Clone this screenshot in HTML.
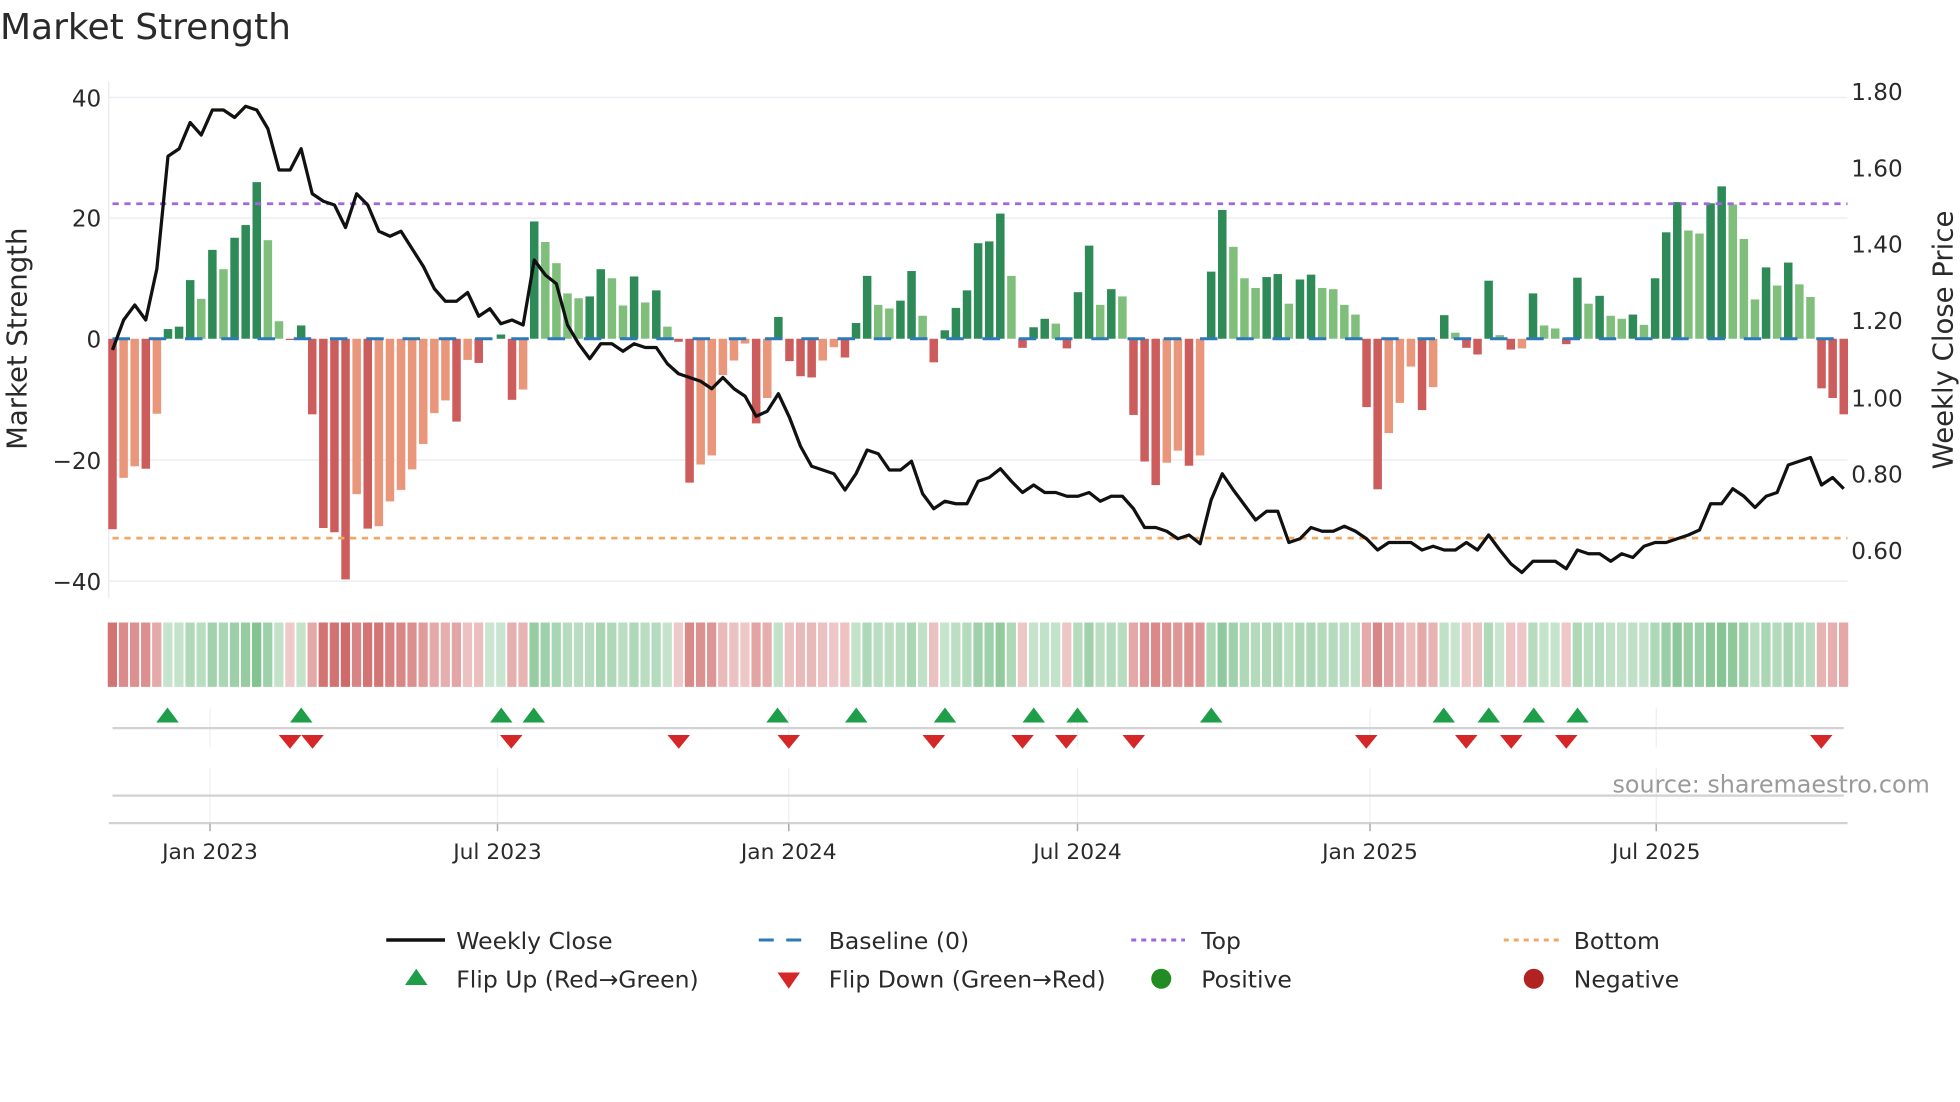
<!DOCTYPE html>
<html><head><meta charset="utf-8"><style>
html,body{margin:0;padding:0;background:#fff;}
svg{display:block;}
text{font-family:"DejaVu Sans","Liberation Sans",sans-serif;fill:#2a2a2a;}
</style></head><body>
<svg id="s" width="1960" height="1102" viewBox="0 0 1568 881.6" xmlns="http://www.w3.org/2000/svg">
<rect width="1568" height="881.6" fill="#fff"/>
<text x="0" y="31" font-size="28.8">Market Strength</text>
<g stroke="#eceef3" stroke-width="1.2">
<line x1="87" x2="1478" y1="78" y2="78"/><line x1="87" x2="1478" y1="174.5" y2="174.5"/>
<line x1="87" x2="1478" y1="368" y2="368"/><line x1="87" x2="1478" y1="465" y2="465"/>
<line x1="87" x2="87" y1="65" y2="478"/>
</g>
<g font-size="18.5" text-anchor="end">
<text x="81" y="85">40</text><text x="81" y="181">20</text><text x="81" y="278">0</text>
<text x="81" y="375">−20</text><text x="81" y="472">−40</text>
</g>
<g font-size="18.5">
<text x="1481" y="80">1.80</text><text x="1481" y="141">1.60</text><text x="1481" y="202">1.40</text>
<text x="1481" y="263">1.20</text><text x="1481" y="325">1.00</text><text x="1481" y="386">0.80</text>
<text x="1481" y="447">0.60</text>
</g>
<text transform="translate(21,271) rotate(-90)" font-size="22" text-anchor="middle">Market Strength</text>
<text transform="translate(1562,272) rotate(-90)" font-size="22" text-anchor="middle">Weekly Close Price</text>
<g id="bars"></g>
<line x1="90" x2="1478" y1="271" y2="271" stroke="#2e7ab8" stroke-width="2.4" stroke-dasharray="14 15"/>
<line x1="90" x2="1478" y1="163" y2="163" stroke="#a066e0" stroke-width="2.2" stroke-dasharray="5 4.5"/>
<line x1="90" x2="1478" y1="430.5" y2="430.5" stroke="#f0a868" stroke-width="2.2" stroke-dasharray="5 4.5"/>
<polyline id="pl" fill="none" stroke="#111" stroke-width="2.6" stroke-linejoin="round"/>
<g id="heat"></g>
<g stroke="#edeff3" stroke-width="1">
<line x1="168" x2="168" y1="566" y2="598"/><line x1="398" x2="398" y1="566" y2="598"/><line x1="631" x2="631" y1="566" y2="598"/><line x1="862" x2="862" y1="566" y2="598"/><line x1="1096" x2="1096" y1="566" y2="598"/><line x1="1325" x2="1325" y1="566" y2="598"/>
<line x1="168" x2="168" y1="614" y2="658"/><line x1="398" x2="398" y1="614" y2="658"/><line x1="631" x2="631" y1="614" y2="658"/><line x1="862" x2="862" y1="614" y2="658"/><line x1="1096" x2="1096" y1="614" y2="658"/><line x1="1325" x2="1325" y1="614" y2="658"/>
</g>
<line x1="90" x2="1475" y1="582.5" y2="582.5" stroke="#d2d2d2" stroke-width="1.8"/>
<line x1="90" x2="1475" y1="636.5" y2="636.5" stroke="#d2d2d2" stroke-width="1.8"/>
<line x1="87" x2="1478" y1="658.5" y2="658.5" stroke="#d2d2d2" stroke-width="1.8"/>
<g stroke="#aaa" stroke-width="1.2">
<line x1="168" x2="168" y1="659" y2="665"/><line x1="398" x2="398" y1="659" y2="665"/><line x1="631" x2="631" y1="659" y2="665"/><line x1="862" x2="862" y1="659" y2="665"/><line x1="1096" x2="1096" y1="659" y2="665"/><line x1="1325" x2="1325" y1="659" y2="665"/>
</g>
<g id="mk"></g>
<text x="1290" y="634" font-size="19.1" style="fill:#9a9a9a">source: sharemaestro.com</text>
<g font-size="17.4" text-anchor="middle">
<text x="168" y="687">Jan 2023</text><text x="398" y="687">Jul 2023</text><text x="631" y="687">Jan 2024</text>
<text x="862" y="687">Jul 2024</text><text x="1096" y="687">Jan 2025</text><text x="1325" y="687">Jul 2025</text>
</g>
<line x1="309" x2="356" y1="752" y2="752" stroke="#111" stroke-width="2.8"/>
<text x="365" y="759" font-size="18.8">Weekly Close</text>
<line x1="607" x2="650" y1="752" y2="752" stroke="#2e7ab8" stroke-width="2.4" stroke-dasharray="12 10"/>
<text x="663" y="759" font-size="18.8">Baseline (0)</text>
<line x1="905" x2="948" y1="752" y2="752" stroke="#a066e0" stroke-width="2.4" stroke-dasharray="4 4"/>
<text x="961" y="759" font-size="18.8">Top</text>
<line x1="1203" x2="1247" y1="752" y2="752" stroke="#f0a868" stroke-width="2.4" stroke-dasharray="4 4"/>
<text x="1259" y="759" font-size="18.8">Bottom</text>
<polygon points="333,775 342,788 324,788" fill="#1f9e4a"/>
<text x="365" y="790" font-size="18.8">Flip Up (Red→Green)</text>
<polygon points="622,778 640,778 631,791" fill="#d62728"/>
<text x="663" y="790" font-size="18.8">Flip Down (Green→Red)</text>
<circle cx="929" cy="783" r="8" fill="#228b22"/>
<text x="961" y="790" font-size="18.8">Positive</text>
<circle cx="1227" cy="783" r="8" fill="#b22222"/>
<text x="1259" y="790" font-size="18.8">Negative</text>
</svg>
<script>
(function(){
var V=[-31.5,-23,-21.1,-21.5,-12.4,1.6,2,9.7,6.6,14.7,11.5,16.7,18.8,25.9,16.3,2.9,-0.2,2.2,-12.5,-31.3,-32,-39.8,-25.7,-31.4,-31,-26.9,-25,-21.6,-17.4,-12.3,-10.2,-13.7,-3.5,-4,0,0.7,-10.1,-8.4,19.4,16,12.5,7.5,6.7,7,11.5,10,5.5,10.3,6,8,2,-0.5,-23.8,-20.8,-19.3,-6,-3.6,-0.8,-14,-9.8,3.6,-3.7,-6.2,-6.4,-3.6,-1.4,-3.1,2.6,10.4,5.6,5,6.3,11.2,3.8,-3.9,1.4,5.1,8,15.8,16.1,20.7,10.4,-1.5,1.9,3.3,2.5,-1.6,7.7,15.4,5.6,8.2,7,-12.6,-20.3,-24.2,-20.5,-18.5,-21,-19.3,11.1,21.3,15.2,10,8.4,10.2,10.7,5.8,9.8,10.6,8.4,8.2,5.6,4,-11.3,-24.9,-15.6,-10.6,-4.6,-11.8,-8,3.9,1,-1.5,-2.6,9.6,0.6,-1.8,-1.6,7.5,2.2,1.7,-0.9,10.1,5.8,7.1,3.8,3.3,4,2.3,10,17.6,22.6,17.9,17.4,22.4,25.2,22.2,16.5,6.5,11.8,8.8,12.6,9,6.9,-8.2,-9.8,-12.5];
var D="DLLDLDDDLD"+"LDDDLLDDDD"+"DDLDLLLLLL"+"LDLDDDDLDL"+"LLLDDLLDLD"+"LDDLLLLLDL"+"DDDDLLDDDL"+"LDDLDDDDDD"+"DLDDDLDDDL"+"DLDDDLLDLD"+"DLLLDDLDDL"+"LLLDDLLLDL"+"DLDDDLDLDL"+"LDDLDLLDLD"+"DDLLDDLLLD"+"LDLLDDD";
var ns="http://www.w3.org/2000/svg";
function el(t,a,p){var e=document.createElementNS(ns,t);for(var k in a)e.setAttribute(k,a[k]);p.appendChild(e);return e;}
var bars=document.getElementById('bars'),heat=document.getElementById('heat');
var step=(1475-90)/156;
for(var i=0;i<V.length;i++){
 var x=90+i*step,v=V[i],h=Math.abs(v)*4.8375,dark=D[i]==='D';
 var c=v>=0?(dark?'#2e8b57':'#7fbf7b'):(dark?'#cd5c5c':'#e9967a');
 if(h>0.3) el('rect',{x:x-3.4,y:v>=0?271-h:271,width:6.8,height:Math.max(h,1),fill:c},bars);
 var a=0.3+0.55*Math.min(Math.abs(v)/35,1);
 var hc=v>=0?'rgba(80,170,100,'+a+')':'rgba(200,80,80,'+a+')';
 el('rect',{x:x-3.8,y:498,width:7.4,height:51.5,fill:hc},heat);
}
var Y=[280,256,244,256,215,125,119,98,108,88,88,94,85,88,103,136,136,119,155,161,164,182,155,164,185,189,185,199,213,231,241,241,234,253,247,259,256,260,208,220,227,260,275,287,275,275,281,275,278,278,291,299,302,305,311,302,311,317,333,329,315,334,357,373,376,379,392,379,360,363,376,376,369,395,407,401,403,403,385,382,375,385,394,388,394,394,397,397,394,401,397,397,407,422,422,425,431,428,435,400,379,392,404,416,409,409,434,431,422,425,425,421,425,431,440,434,434,434,440,437,440,440,434,440,428,440,451,458,449,449,449,455,440,443,443,449,443,446,437,434,434,431,428,424,403,403,391,397,406,397,394,372,369,366,388,382,391];
var pts=[];for(var j=0;j<Y.length;j++)pts.push((90+j*step).toFixed(1)+','+Y[j]);
document.getElementById('pl').setAttribute('points',pts.join(' '));
var mk=document.getElementById('mk');
[134,241,401,427,622,685,756,827,862,969,1155,1191,1227,1262].forEach(function(x){el('polygon',{points:x+',566 '+(x+9)+',578 '+(x-9)+',578',fill:'#1f9e4a'},mk);});
[232,250,409,543,631,747,818,853,907,1093,1173,1209,1253,1457].forEach(function(x){el('polygon',{points:(x-9)+',588 '+(x+9)+',588 '+x+',599',fill:'#d62728'},mk);});
})();
</script>
</body></html>
